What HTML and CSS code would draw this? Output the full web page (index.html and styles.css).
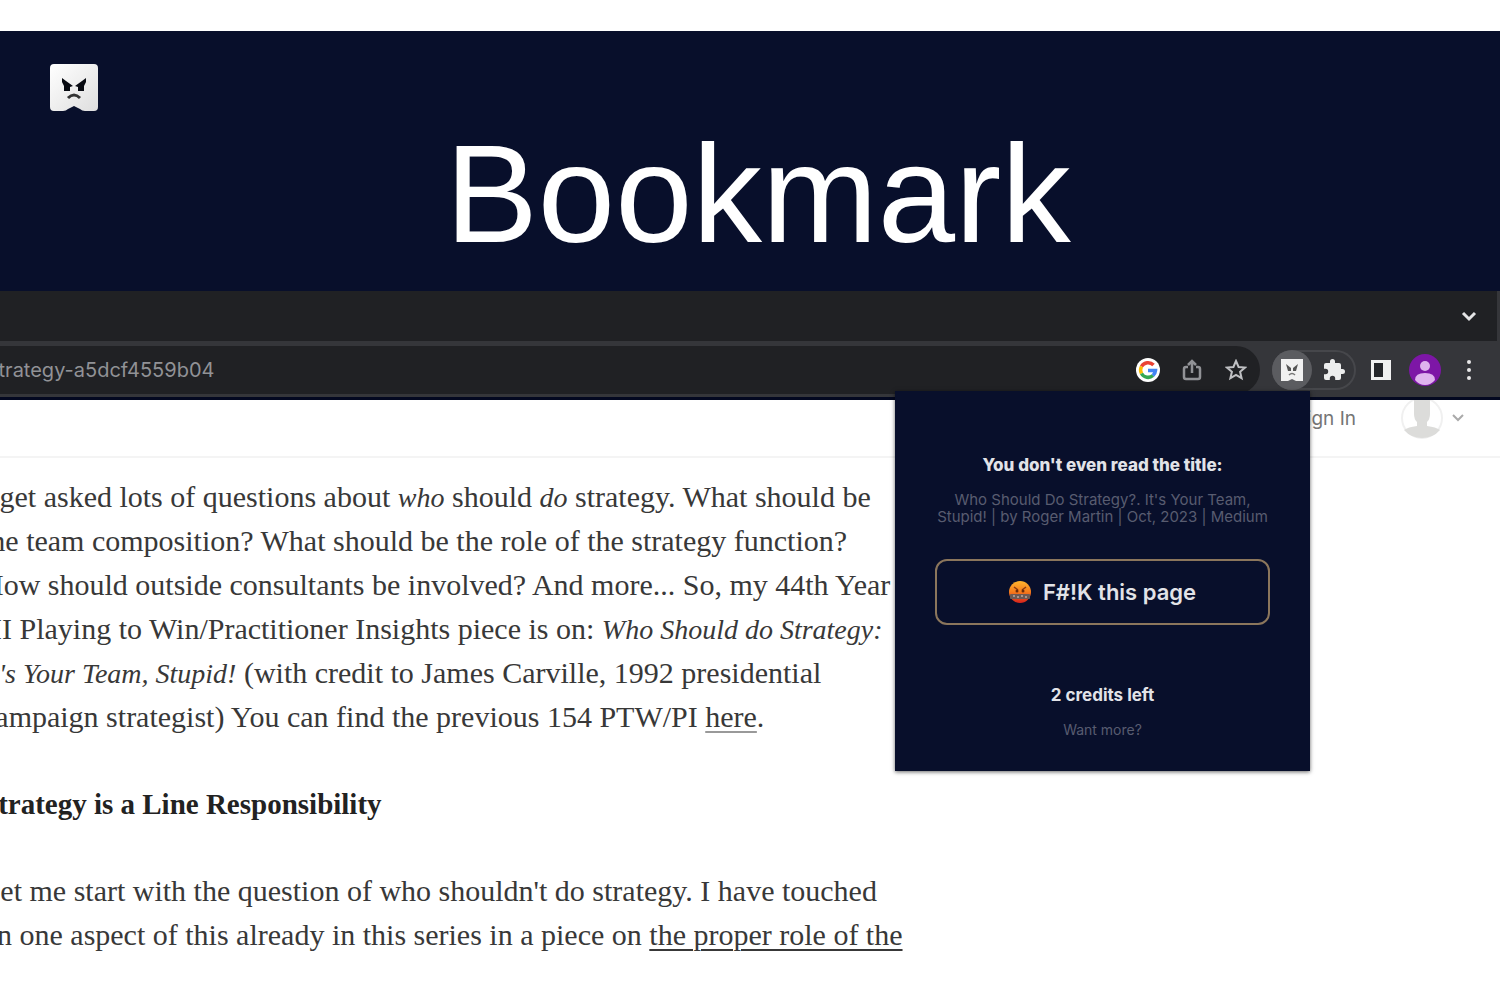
FILE: index.html
```html
<!DOCTYPE html>
<html lang="en">
<head>
    <meta charset="UTF-8">
    <meta name="viewport" content="width=device-width, initial-scale=1.0">
    <title>Bookmark</title>
    <link rel="stylesheet" href="styles.css">
</head>
<body>

    <!-- Banner -->
    <header class="banner">
        <svg class="logo" viewBox="0 0 48 48" aria-hidden="true">
            <defs>
                <linearGradient id="paper" x1="0" y1="0" x2="1" y2="1">
                    <stop offset="0" stop-color="#ffffff"/>
                    <stop offset="1" stop-color="#dedede"/>
                </linearGradient>
            </defs>
            <path d="M4 0h40q4 0 4 4v39q0 4-4 4h-9q-3 0-5-2l-6-3-6 3q-2 2-5 2H4q-4 0-4-4V4q0-4 4-4z" fill="url(#paper)"/>
            <path d="M12 14l4 3 7 5-3 1v4h-6v-5l-2-4zM36 14l-4 3-7 5 3 1v4h6v-5l2-4z" fill="#080b12"/>
            <path d="M18 34q6-6 12 0" fill="none" stroke="#333" stroke-width="3"/>
        </svg>
        <h1>Bookmark</h1>
    </header>

    <div class="browser">
        <div class="tab-strip">
            <button class="icon-btn" aria-label="Search tabs">
                <svg width="16" height="14" viewBox="0 0 16 14"><path d="M2 4l6 6 6-6" fill="none" stroke="#e4e4e6" stroke-width="3"/></svg>
            </button>
        </div>

        <div class="toolbar">
            <div class="omnibox">
                <span class="url">strategy-a5dcf4559b04</span>
                <button class="icon-btn" aria-label="Google">
                    <svg width="24" height="24" viewBox="0 0 24 24">
                        <circle cx="12" cy="12" r="12" fill="#fff"/>
                        <g fill="none" stroke-width="3.500">
                            <path d="M17.500 7A7.500 7.500 0 0 0 5.500 8.500" stroke="#ea4335"/>
                            <path d="M5.500 8.500a7.500 7.500 0 0 0 0 7" stroke="#fbbc05"/>
                            <path d="M5.500 15.500a7.500 7.500 0 0 0 11.500 2" stroke="#34a853"/>
                            <path d="M17 17.500a7.500 7.500 0 0 0 2.500-5H12" stroke="#4285f4"/>
                        </g>
                    </svg>
                </button>
                <button class="icon-btn" aria-label="Share">
                    <svg width="20" height="22" viewBox="0 0 20 22" fill="none" stroke="#919296" stroke-width="2.500">
                        <path d="M6 8H4q-2 0-2 2v8q0 2 2 2h12q2 0 2-2v-8q0-2-2-2h-2M10 14V3M6 6l4-4 4 4"/>
                    </svg>
                </button>
                <button class="icon-btn" aria-label="Bookmark this tab">
                    <svg width="22" height="22" viewBox="0 0 22 22" fill="none" stroke="#bfc0c3" stroke-width="2">
                        <path d="M11 2l2.600 6 6.400.600-4.900 4.200 1.500 6.400-5.600-3.400-5.600 3.400 1.500-6.400L2 8.600 8.400 8z"/>
                    </svg>
                </button>
            </div>

            <div class="extensions">
                <button class="icon-btn active" aria-label="Bookmark extension">
                    <svg width="24" height="24" viewBox="0 0 24 24">
                        <path d="M1 1h22v22h-7l-4-2-4 2H1z" fill="#f1f1f1"/>
                        <path d="M6 6l5 4v3H8zM18 6l-5 4v3h3z" fill="#555"/>
                        <path d="M9 17q3-3 6 0" fill="none" stroke="#777" stroke-width="1.500"/>
                    </svg>
                </button>
                <button class="icon-btn" aria-label="Extensions">
                    <svg width="24" height="24" viewBox="0 0 24 24">
                        <path d="M20.500 11H19V7a2 2 0 0 0-2-2h-4V3.500a2.500 2.500 0 0 0-5 0V5H4a2 2 0 0 0-2 2v3.800h1.500a2.700 2.700 0 0 1 0 5.400H2V20a2 2 0 0 0 2 2h3.800v-1.500a2.700 2.700 0 0 1 5.400 0V22H17a2 2 0 0 0 2-2v-4h1.500a2.500 2.500 0 0 0 0-5z" fill="#eceded"/>
                    </svg>
                </button>
            </div>
            <button class="icon-btn" aria-label="Side panel">
                <svg width="22" height="22" viewBox="0 0 22 22"><path d="M1 1h20v20H1zM4 4v14h9V4z" fill="#f1f1f1" fill-rule="evenodd"/><path d="M4 4h9v14H4z" fill="#25262a"/></svg>
            </button>
            <button class="icon-btn" aria-label="Profile">
                <svg width="32" height="32" viewBox="0 0 32 32">
                    <circle cx="16" cy="16" r="16" fill="#7d16a6"/>
                    <circle cx="16" cy="12" r="5" fill="#dfb3ee"/>
                    <path d="M6 26q0-7 10-7t10 7q-4 5-10 5T6 26z" fill="#dfb3ee"/>
                </svg>
            </button>
            <button class="icon-btn" aria-label="Menu">
                <svg width="6" height="22" viewBox="0 0 6 22" fill="#e8e8e8"><circle cx="3" cy="3" r="2"/><circle cx="3" cy="11" r="2"/><circle cx="3" cy="19" r="2"/></svg>
            </button>
        </div>

        <!-- Extension popup -->
        <div class="popup">
            <h2>You don't even read the title:</h2>
            <p class="page-title">Who Should Do Strategy?. It's Your Team,<br>Stupid! | by Roger Martin | Oct, 2023 | Medium</p>
            <button class="main-btn">
                <svg width="22" height="24" viewBox="0 0 22 24" aria-hidden="true">
                    <defs>
                        <linearGradient id="angry" x1="0" y1="0" x2="0" y2="1">
                            <stop offset="0" stop-color="#ffb62e"/>
                            <stop offset="0.500" stop-color="#f57a1c"/>
                            <stop offset="1" stop-color="#d6221c"/>
                        </linearGradient>
                    </defs>
                    <circle cx="11" cy="12" r="11" fill="url(#angry)"/>
                    <path d="M5 7l4 3M17 7l-4 3" stroke="#8c3b10" stroke-width="1.500"/>
                    <circle cx="8" cy="11" r="1.500" fill="#6b2b0c"/>
                    <circle cx="14" cy="11" r="1.500" fill="#6b2b0c"/>
                    <rect x="1" y="14" width="20" height="5" rx="1" fill="#6d5a55"/>
                    <path d="M4 16h2M8 17h2M12 16h2M16 17h2" stroke="#b9a8a0" stroke-width="1.500"/>
                </svg>
                F#!K this page
            </button>
            <p class="credits">2 credits left</p>
            <a class="more" href="#">Want more?</a>
        </div>

        <main class="page">
            <nav class="site-nav">
                <a class="sign-in" href="#">Sign In</a>
                <button class="account" aria-label="Account">
                    <svg width="42" height="42" viewBox="0 0 42 42">
                        <circle cx="21" cy="21" r="20" fill="#fff" stroke="#f0f0f0" stroke-width="2"/>
                        <path d="M13 3q8-3 16 0v14q0 5-3 8v4q9 1 13 4-7 8-18 8T3 33q4-3 13-4v-4q-3-3-3-8z" fill="#dcdcda"/>
                    </svg>
                    <svg width="12" height="8" viewBox="0 0 12 8"><path d="M1 1l5 5 5-5" fill="none" stroke="#aaa" stroke-width="2"/></svg>
                </button>
            </nav>
            <article class="story">
                <p>I get asked lots of questions about <em>who</em> should <em>do</em> strategy. What should be<br>
                the team composition? What should be the role of the strategy function?<br>
                How should outside consultants be involved? And more... So, my 44th Year<br>
                III Playing to Win/Practitioner Insights piece is on: <em>Who Should do Strategy:</em><br>
                <em>It's Your Team, Stupid!</em> (with credit to James Carville, 1992 presidential<br>
                campaign strategist) You can find the previous 154 PTW/PI <a class="soft" href="#">here</a>.</p>
                <h3>Strategy is a Line Responsibility</h3>
                <p>Let me start with the question of who shouldn't do strategy. I have touched<br>
                on one aspect of this already in this series in a piece on <a href="#">the proper role of the</a></p>
            </article>
        </main>
    </div>

</body>
</html>
```
FILE: styles.css
```css
* {
    box-sizing: border-box;
}
body {
    margin: 0;
    padding-top: 31px;
    background-color: #fff;
    font-family: Inter, "Liberation Sans", sans-serif;
    overflow-x: hidden;
}
h1, h2, h3, p {
    margin: 0;
}
button {
    background: none;
    border: none;
    padding: 0;
    font-family: inherit;
    cursor: pointer;
}
svg {
    display: block;
    flex: none;
}

/* Banner */
.banner {
    background-color: #080f2b;
    height: 260px;
    padding: 33px 50px 0;
}
.logo {
    width: 48px;
    height: 48px;
}
h1 {
    color: #fff;
    font-family: "Liberation Sans", Arial, sans-serif;
    font-size: 139px;
    font-weight: normal;
    line-height: 164px;
    padding-left: 16px;
    text-align: center;
}

/* Browser window */
.browser {
    position: relative;
}
.tab-strip {
    display: flex;
    justify-content: flex-end;
    align-items: center;
    height: 50px;
    padding-right: 6px;
    background-color: #202124;
    border-right: 3px solid #35363a;
}
.toolbar {
    display: flex;
    align-items: center;
    height: 59px;
    padding: 2px 9px 0 0;
    background-color: #35363a;
    border-bottom: 3px solid #030820;
}
.icon-btn {
    display: flex;
    align-items: center;
    justify-content: center;
    flex: none;
    width: 44px;
    height: 40px;
}
.omnibox {
    display: flex;
    align-items: center;
    flex: 1;
    height: 48px;
    margin-right: 12px;
    padding-right: 2px;
    background-color: #202124;
    border-radius: 0 24px 24px 0;
}
.url {
    flex: 1;
    margin-left: -12px;
    color: #919296;
    font-size: 20px;
}
.extensions {
    display: flex;
    align-items: center;
    height: 40px;
    margin-right: 3px;
    border-radius: 20px;
    box-shadow: inset 0 0 0 2px #46474b;
}
.active {
    width: 40px;
    background-color: #5b5c60;
    border-radius: 20px;
}

/* Popup */
.popup {
    position: absolute;
    top: 100px;
    right: 190px;
    display: flex;
    flex-direction: column;
    align-items: center;
    width: 415px;
    padding: 64px 40px 33px;
    background-color: #080f2b;
    color: #e2e3e8;
    text-align: center;
    box-shadow: 0 1px 4px rgba(0, 0, 0, 0.6);
}
.popup h2 {
    font-size: 17px;
    font-weight: 800;
    line-height: 20px;
}
.page-title {
    margin-top: 16px;
    color: #585c70;
    font-size: 15px;
    line-height: 17px;
    white-space: nowrap;
}
.main-btn {
    display: flex;
    align-items: center;
    justify-content: center;
    gap: 12px;
    width: 100%;
    height: 66px;
    margin-top: 34px;
    border: 2px solid #8b765c;
    border-radius: 12px;
    color: #e2e3e8;
    font-size: 22px;
    font-weight: 600;
}
.credits {
    margin-top: 60px;
    font-size: 17px;
    font-weight: 700;
    line-height: 20px;
}
.more {
    margin-top: 16px;
    color: #585c70;
    font-size: 14px;
    line-height: 17px;
    text-decoration: none;
}

/* Page behind the popup */
.page {
    overflow: hidden;
}
.site-nav {
    display: flex;
    align-items: center;
    justify-content: flex-end;
    gap: 45px;
    height: 58px;
    padding: 0 36px 20px 0;
    border-bottom: 2px solid #f4f4f4;
}
.sign-in {
    color: #757575;
    font-size: 19px;
    text-decoration: none;
}
.account {
    display: flex;
    align-items: center;
    gap: 9px;
}
.story {
    margin-left: -18px;
    padding: 17px 0 40px;
    color: #383838;
    font-family: "Liberation Serif", "Times New Roman", serif;
    font-size: 30px;
    line-height: 44px;
    white-space: nowrap;
}
.story em {
    font-size: 28px;
    line-height: 28px;
}
.story h3 {
    margin: 43px 0;
    color: #222;
    font-size: 29px;
    line-height: 44px;
}
.story a {
    color: inherit;
    text-decoration-thickness: 2px;
    text-underline-offset: 4px;
}
.story .soft {
    text-decoration-color: #999;
}
```
